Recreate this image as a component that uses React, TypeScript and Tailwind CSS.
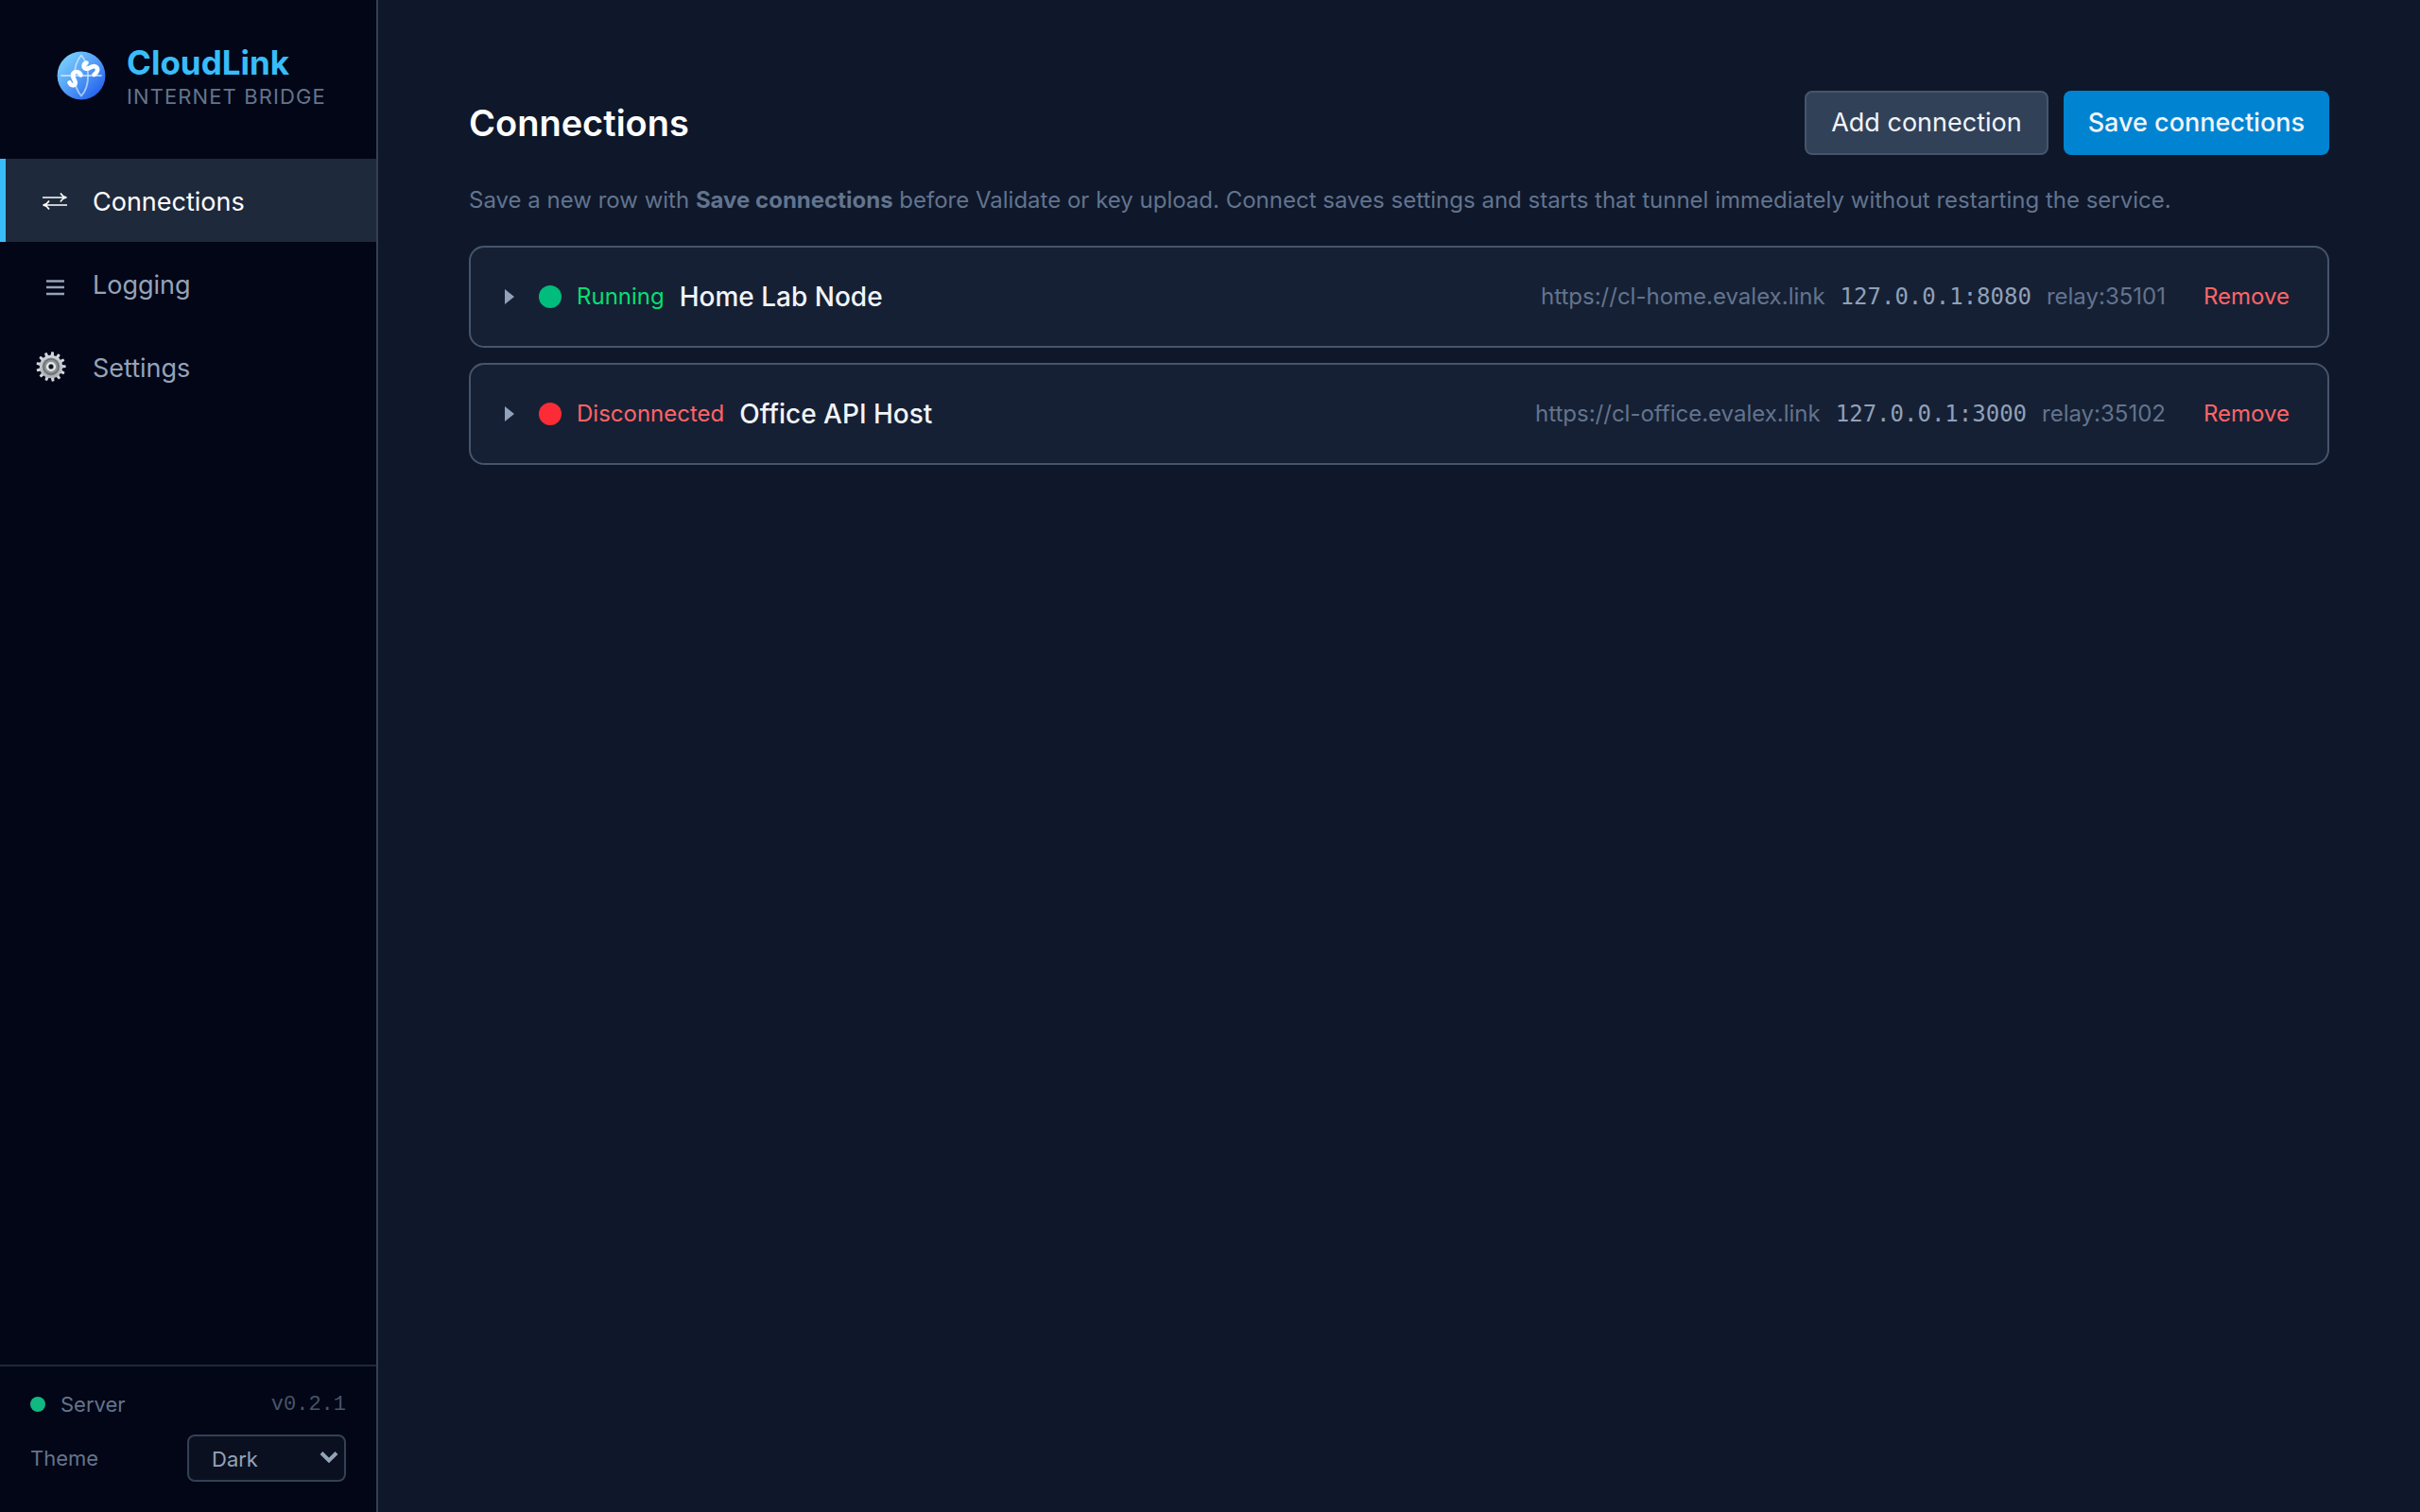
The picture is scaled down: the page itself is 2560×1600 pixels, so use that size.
import { useState } from 'react';
import type { ReactNode } from 'react';

type Page = 'connections' | 'logging' | 'settings';

interface Connection {
  id: number;
  name: string;
  running: boolean;
  url: string;
  local: string;
  relay: string;
}

const initialConnections: Connection[] = [
  { id: 1, name: 'Home Lab Node', running: true, url: 'https://cl-home.evalex.link', local: '127.0.0.1:8080', relay: 'relay:35101' },
  { id: 2, name: 'Office API Host', running: false, url: 'https://cl-office.evalex.link', local: '127.0.0.1:3000', relay: 'relay:35102' },
];

function Logo() {
  return (
    <svg className="size-[52px] shrink-0" viewBox="0 0 52 52" fill="none" aria-hidden="true">
      <defs>
        <linearGradient id="globe" x1="5" y1="5" x2="44" y2="46" gradientUnits="userSpaceOnUse">
          <stop stopColor="#7dd3fc" />
          <stop offset="0.5" stopColor="#559ff8" />
          <stop offset="1" stopColor="#2563eb" />
        </linearGradient>
      </defs>
      <circle cx="26" cy="26" r="25.4" fill="url(#globe)" />
      <g stroke="#e0f2fe" strokeOpacity="0.65" strokeWidth="1.8" strokeLinecap="round" strokeLinejoin="round">
        <path d="M5 26H47" />
        <path d="M26 4.5C35.5 15 35.5 37 26 47.5C16.5 37 16.5 15 26 4.5Z" />
      </g>
      <g stroke="#fff" strokeWidth="4.6" strokeLinecap="round" strokeLinejoin="round">
        <path d="M13.5 33.5C15 36.5 19 37.500 19.700 34C20 30.500 15 27 17.500 23.500C20 20.700 24.500 22 25.500 25.500" />
        <path d="M31.500 12.500C28 13.500 27.500 17.500 31 18.700C34.500 19.700 37 14.500 41 16.500C44.500 18.500 43.500 22.500 39.500 25" />
      </g>
    </svg>
  );
}

function ArrowsIcon() {
  return (
    <svg width="40" height="40" viewBox="0 0 40 40" fill="none" stroke="currentColor" strokeWidth="1.5">
      <path d="M7 15H32M26 10.500C27.500 13 29.500 14.500 32.500 15C29.500 15.500 27.500 17 26 19.500" />
      <path d="M33 23H8M14 18.500C12.500 21 10.500 22.500 7.500 23C10.500 23.500 12.500 25 14 27.500" />
    </svg>
  );
}

function LinesIcon() {
  return (
    <svg width="40" height="40" viewBox="0 0 40 40" fill="none" stroke="currentColor" strokeWidth="2.4">
      <path d="M11 15.500H30M11 22H30M11 29H30" />
    </svg>
  );
}

const teeth = Array.from({ length: 13 }, (_, i) => (i * 360) / 13 + 6);

function GearIcon() {
  return (
    <svg className="mb-1" width="32" height="32" viewBox="0 0 32 32" fill="none">
      <defs>
        <linearGradient id="metal" x1="16" y1="0" x2="16" y2="32" gradientUnits="userSpaceOnUse">
          <stop stopColor="#d5dde2" />
          <stop offset="1" stopColor="#a9a9ae" />
        </linearGradient>
      </defs>
      {teeth.map(a => (
        <path key={a} d="M14.2 5L14.700 0.400H17.300L17.800 5Z" fill="url(#metal)" transform={`rotate(${a} 16 16)`} />
      ))}
      <circle cx="16" cy="16" r="12.200" fill="url(#metal)" />
      <circle cx="16" cy="16" r="9.400" fill="#84898d" />
      <circle cx="16" cy="16" r="8" stroke="#65696d" strokeWidth="1" />
      <circle cx="16" cy="16" r="6.800" fill="#8f9498" />
      <circle cx="16" cy="16" r="3.900" fill="#3c4044" stroke="#e4e8ea" strokeWidth="2.400" />
      <circle cx="16" cy="16" r="2" fill="#0b0d14" />
    </svg>
  );
}

const navItems: { id: Page; label: string; icon: ReactNode }[] = [
  { id: 'connections', label: 'Connections', icon: <ArrowsIcon /> },
  { id: 'logging', label: 'Logging', icon: <LinesIcon /> },
  { id: 'settings', label: 'Settings', icon: <GearIcon /> },
];

function Sidebar({ page, onSelect }: { page: Page; onSelect: (p: Page) => void }) {
  return (
    <aside className="w-[400px] shrink-0 flex flex-col bg-[#020617] border-r-2 border-[#334155]">
      <div className="flex items-center gap-[22px] h-[168px] pl-[60px] pb-2">
        <Logo />
        <div className="pt-1">
          <div className="text-[35px] leading-10 font-bold text-[#38bdf8]">CloudLink</div>
          <div className="text-[22px] leading-8 tracking-wider uppercase text-[#64748b]">Internet Bridge</div>
        </div>
      </div>

      <nav className="flex-1">
        {navItems.map(item => (
          <a
            key={item.id}
            href={`#${item.id}`}
            onClick={() => onSelect(item.id)}
            className={`flex items-center gap-5 h-[88px] pl-8 pt-1 border-l-[6px] text-[27px] ${
              page === item.id ? 'bg-[#1e293b] border-[#38bdf8] text-white' : 'border-transparent text-[#94a3b8]'
            }`}
          >
            <span className="w-10 flex">{item.icon}</span>
            <span>{item.label}</span>
          </a>
        ))}
      </nav>

      <div className="flex flex-col gap-3.5 px-8 pt-[22px] pb-8 border-t-2 border-[#1e293b]">
        <div className="flex items-center justify-between h-9">
          <div className="flex items-center gap-4 text-[22px] text-[#64748b]">
            <span className="size-4 rounded-full bg-[#10b981]" />
            Server
          </div>
          <span className="font-['Liberation_Mono',monospace] text-[22px] text-[#475569]">v0.2.1</span>
        </div>
        <div className="flex items-center justify-between">
          <label htmlFor="theme" className="text-[22px] text-[#64748b]">Theme</label>
          <div className="relative w-[168px]">
            <select
              id="theme"
              defaultValue="Dark"
              className="appearance-none w-full h-[50px] pl-6 pt-0.5 rounded-lg border-2 border-[#334155] bg-[#0b1020] text-[22px] text-[#94a3b8]"
            >
              <option>Dark</option>
              <option>Light</option>
            </select>
            <svg className="absolute right-2 top-4 pointer-events-none" width="20" height="16" viewBox="0 0 20 16" fill="none" stroke="#94a3b8" strokeWidth="4">
              <path d="M2 3.500L10 11.500L18 3.500" />
            </svg>
          </div>
        </div>
      </div>
    </aside>
  );
}

function ConnectionRow({ connection: c, onRemove }: { connection: Connection; onRemove: () => void }) {
  return (
    <div className="flex items-center justify-between h-[108px] pl-8 pr-6 rounded-2xl border-2 border-slate-600 bg-slate-800/50">
      <button type="button" className="flex items-center gap-4 text-left">
        <svg className="mr-2" width="16" height="16" viewBox="0 0 16 16" fill="#90a1b9">
          <path d="M4 0L14 8L4 16Z" />
        </svg>
        <span className={`size-6 rounded-full ${c.running ? 'bg-emerald-500' : 'bg-red-500'}`} />
        <span className={`text-[24px] ${c.running ? 'text-green-400' : 'text-red-400'}`}>
          {c.running ? 'Running' : 'Disconnected'}
        </span>
        <span className="text-[28px] font-medium text-slate-100">{c.name}</span>
      </button>
      <div className="flex items-center gap-4 text-[24px] text-slate-500">
        <span>{c.url}</span>
        <span className="font-['DejaVu_Sans_Mono',monospace] text-slate-400">{c.local}</span>
        <span>{c.relay}</span>
        <button type="button" onClick={onRemove} className="ml-2 px-4 py-2 text-red-400">Remove</button>
      </div>
    </div>
  );
}

export default function App() {
  const [page, setPage] = useState<Page>('connections');
  const [connections, setConnections] = useState(initialConnections);

  const addConnection = () => {
    setConnections(list => [
      ...list,
      { id: Date.now(), name: 'New connection', running: false, url: '', local: '127.0.0.1:80', relay: '' },
    ]);
  };

  return (
    <div className="flex min-h-screen bg-[#0f172a] font-[Inter,sans-serif]">
      <Sidebar page={page} onSelect={setPage} />
      <main className="flex-1 min-w-0 p-24">
        <div className="flex items-center justify-between">
          <h1 className="text-[38px] leading-[56px] font-semibold text-white">Connections</h1>
          <div className="flex gap-4">
            <button type="button" onClick={addConnection} className="h-[68px] px-[26px] rounded-lg border-2 border-slate-600 bg-slate-700 text-[27px] text-slate-100">
              Add connection
            </button>
            <button type="button" className="h-[68px] px-[26px] rounded-lg bg-sky-600 text-[27px] font-medium text-slate-100">
              Save connections
            </button>
          </div>
        </div>

        <p className="mt-8 mb-8 text-[24px] leading-8 text-slate-500">
          Save a new row with <strong className="font-bold">Save connections</strong> before Validate or key upload. Connect saves settings and starts that tunnel immediately without restarting the service.
        </p>

        <div className="flex flex-col gap-4">
          {connections.map(c => (
            <ConnectionRow
              key={c.id}
              connection={c}
              onRemove={() => setConnections(list => list.filter(x => x.id !== c.id))}
            />
          ))}
        </div>
      </main>
    </div>
  );
}
